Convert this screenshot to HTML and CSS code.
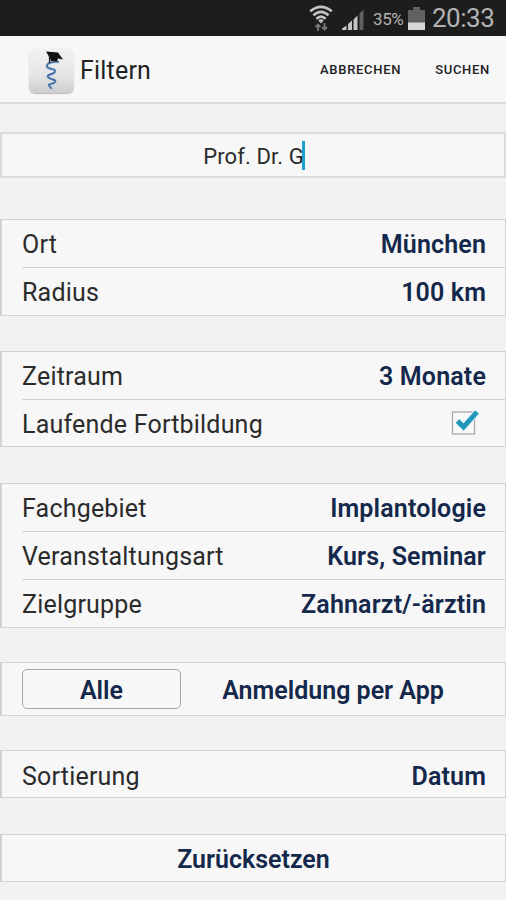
FILE: index.html
```html
<!DOCTYPE html>
<html lang="de">
<head>
    <meta charset="UTF-8">
    <meta name="viewport" content="width=device-width, initial-scale=1.0">
    <title>Filtern</title>
    <link rel="stylesheet" href="styles.css">
</head>
<body>
    <!-- Statusleiste -->
    <div class="statusbar">
        <svg class="wifi" width="24" height="26" viewBox="0 0 24 26">
            <g fill="none" stroke="#c4c4c4" stroke-width="2.6">
                <path d="M1.2 6.2Q12 -2.6 22.8 6.2"/>
                <path d="M4.4 10.200Q12 3.4 19.6 10.200"/>
                <path d="M7.4 13.9Q12 9.3 16.6 13.9"/>
            </g>
            <path d="M9.3 15.500Q12 13.2 14.7 15.500L12 18.500Z" fill="#c4c4c4"/>
            <path d="M9 19v7M6.500 22l2.500-2.5 2.500 2.5M15.500 18v7M13 22l2.500 2.5 2.500-2.5" fill="none" stroke="#777" stroke-width="1.8"/>
        </svg>
        <svg class="signal" width="23" height="23" viewBox="0 0 23 23">
            <path d="M0 22v-1.500l4.500-3V22zM6 22v-6l4-3.500V22zM11.5 22v-10.500l4-4V22z" fill="#c4c4c4"/>
            <path d="M17.5 22V5.500l4-4V22z" fill="#606060"/>
        </svg>
        <span class="percent">35%</span>
        <svg class="battery" width="17" height="23" viewBox="0 0 17 23">
            <path d="M5 0h7v3h5v20H0V3h5z" fill="#616161"/>
            <path d="M0 15.500h17V23H0z" fill="#d6d6d6"/>
        </svg>
        <span class="clock">20:33</span>
    </div>

    <!-- Kopfzeile -->
    <div class="header">
        <div class="logo">
            <svg width="45" height="45" viewBox="0 0 45 45">
                <path d="M30 14C25 13 17 15 18 18.500S27 20 26 23.500S17 26 19 29S28 31 26 34S19 35 20 37.500S23 39 22 41" fill="none" stroke="#b4cbe2" stroke-width="3"/>
                <path d="M30 14C25 13 17 15 18 18.500S27 20 26 23.500S17 26 19 29S28 31 26 34S19 35 20 37.500S23 39 22 41" fill="none" stroke="#416a9e" stroke-width="1.6"/>
                <path d="M17 3.500L29 4.500L34 11.500L29 10.500L28 13.500L22 13L20.500 9.500Z" fill="#111"/>
                <path d="M20.500 8v7" stroke="#222" stroke-width="1.3"/>
            </svg>
        </div>
        <h1 class="title">Filtern</h1>
        <span class="action">ABBRECHEN</span>
        <span class="action">SUCHEN</span>
    </div>

    <div class="search"><span>Prof. Dr. G</span><i class="cursor"></i></div>

    <div class="group ort">
        <div class="row"><span>Ort</span><b>München</b></div>
        <div class="row"><span>Radius</span><b>100 km</b></div>
    </div>

    <div class="group zeit">
        <div class="row"><span>Zeitraum</span><b>3 Monate</b></div>
        <div class="row">
            <span>Laufende Fortbildung</span>
            <svg class="check" width="30" height="30" viewBox="0 0 30 30">
                <rect x="2.500" y="4" width="22" height="22" fill="#f9f9f9" stroke="#a9a9a9" stroke-width="1.300"/>
                <path d="M7.500 13L13.500 19L27 4" fill="none" stroke="#d6f0f8" stroke-width="7"/>
                <path d="M7.500 13L13.500 19L27 4" fill="none" stroke="#2196bb" stroke-width="4.800"/>
            </svg>
        </div>
    </div>

    <div class="group fach">
        <div class="row"><span>Fachgebiet</span><b>Implantologie</b></div>
        <div class="row"><span>Veranstaltungsart</span><b>Kurs, Seminar</b></div>
        <div class="row"><span>Zielgruppe</span><b>Zahnarzt/-ärztin</b></div>
    </div>

    <div class="group tabs">
        <b class="tab active">Alle</b>
        <b class="tab">Anmeldung per App</b>
    </div>

    <div class="group sort">
        <div class="row"><span>Sortierung</span><b>Datum</b></div>
    </div>

    <div class="group reset"><b>Zurücksetzen</b></div>
</body>
</html>
```
FILE: styles.css
```css
* {
    margin: 0;
    padding: 0;
    box-sizing: border-box;
}

body {
    font-family: Roboto, sans-serif;
    background-color: #f2f2f2;
    color: #2b2b2b;
    width: 506px;
    height: 900px;
    overflow: hidden;
}

/* Statusleiste */
.statusbar {
    display: flex;
    align-items: center;
    justify-content: flex-end;
    height: 36px;
    padding-right: 12px;
    background-color: #1d1d1d;
    color: #b4b4b4;
}

.wifi {
    margin-right: 9px;
}

.signal {
    margin: 2px 8px 0 0;
}

.percent {
    font-size: 17px;
    width: 30px;
    margin: 2px 5px 0 0;
    letter-spacing: -0.4px;
}

.battery {
    margin-right: 7px;
}

.clock {
    font-size: 26px;
    width: 62px;
    letter-spacing: -0.5px;
}

/* Kopfzeile */
.header {
    display: flex;
    align-items: center;
    height: 68px;
    padding: 2px 15px 0 29px;
    background-color: #f7f7f7;
    border-bottom: 2px solid #dcdcdc;
}

.logo {
    width: 45px;
    height: 45px;
    margin-right: 6px;
    border-radius: 6px;
    background: linear-gradient(#f2f2f2, #e6e6e6 60%, #cdcdcd);
    box-shadow: 0 1px 1px #bbb;
}

.title {
    flex: 1;
    font-size: 25px;
    font-weight: 400;
    letter-spacing: 0.2px;
    color: #222;
}

.action {
    margin: -1px 0 0 34px;
    font-size: 13px;
    font-weight: 500;
    letter-spacing: 0.7px;
    color: #222;
}

.action:last-child {
    margin-right: 1px;
}

.search {
    display: flex;
    align-items: center;
    justify-content: center;
    height: 46px;
    margin-top: 28px;
    padding-left: 2px;
    border: 2px solid #dbdbdb;
    background-color: #f7f7f7;
    font-size: 22px;
    letter-spacing: 0.1px;
}

.search span {
    padding-top: 2px;
}

.cursor {
    width: 3px;
    height: 29px;
    margin-left: -2px;
    background-color: #1d9fd4;
}

/* Gruppen */
.group {
    border: 1px solid #d2d2d2;
    border-left-width: 2px;
    background-color: #f7f7f7;
    font-size: 25px;
}

.row {
    display: flex;
    align-items: center;
    justify-content: space-between;
    height: 48px;
    margin-left: 20px;
    padding: 2px 19px 0 0;
    letter-spacing: 0.2px;
}

.row:first-child {
    height: 47px;
}

.row + .row {
    border-top: 1px solid #d2d2d2;
}

b {
    font-weight: 600;
    letter-spacing: 0.15px;
    color: #14284b;
}

.tabs b,
.reset b {
    letter-spacing: 0;
}

.check {
    margin: 0 6px 3px 0;
}

.ort {
    height: 97px;
    margin-top: 41px;
}

.zeit {
    height: 96px;
    margin-top: 35px;
}

.fach {
    height: 145px;
    margin-top: 36px;
}

.tabs {
    display: flex;
    align-items: center;
    height: 54px;
    margin-top: 34px;
    padding-left: 20px;
}

.tab {
    flex: 1;
    padding: 2px 20px 0 0;
    text-align: center;
}

.tab.active {
    flex: none;
    width: 159px;
    height: 40px;
    padding: 0;
    border: 1px solid #a5a8ab;
    border-radius: 5px;
    line-height: 41px;
}

.sort {
    height: 48px;
    margin-top: 34px;
}

.sort .row {
    padding-top: 3px;
}

.reset {
    height: 48px;
    margin-top: 36px;
    line-height: 49px;
    text-align: center;
}
```
